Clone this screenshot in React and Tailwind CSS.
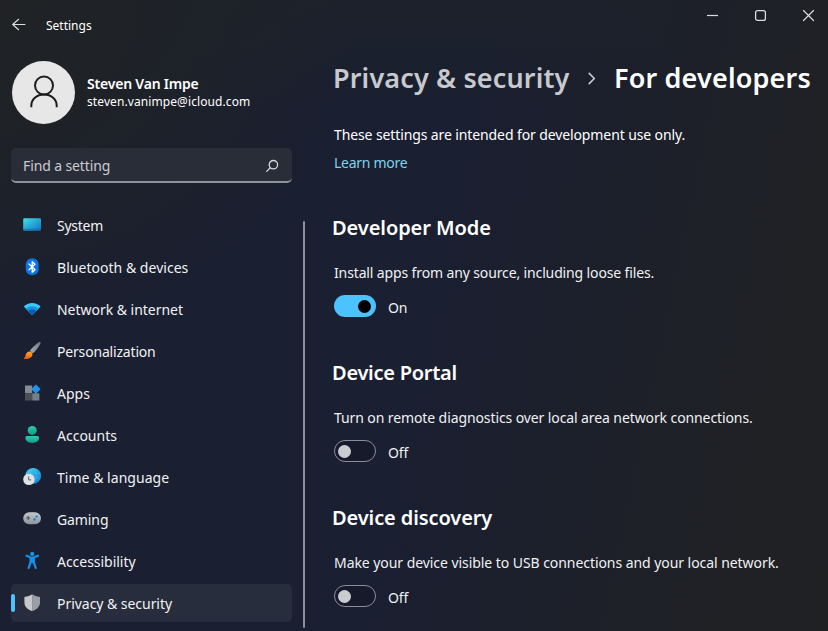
const sectionList = [
  {
    title: "Developer Mode",
    titleClass: "tracking-[-0.07px]",
    text: "Install apps from any source, including loose files.",
    textClass: "tracking-[-0.13px]",
    on: true,
  },
  {
    title: "Device Portal",
    titleClass: "tracking-[-0.26px]",
    text: "Turn on remote diagnostics over local area network connections.",
    textClass: "tracking-[-0.1px]",
    on: false,
  },
  {
    title: "Device discovery",
    titleClass: "tracking-[-0.1px]",
    text: "Make your device visible to USB connections and your local network.",
    textClass: "tracking-[-0.06px]",
    on: false,
  },
];

function SystemIcon() {
  return (
    <svg viewBox="0 0 20 20" className="size-5">
      <defs>
        <linearGradient id="sys" x1="0" y1="0" x2="1" y2="1">
          <stop offset="0" stopColor="#3fe0e6" />
          <stop offset="1" stopColor="#1173c4" />
        </linearGradient>
      </defs>
      <rect x="1.2" y="3.2" width="17.8" height="12.6" rx="1.2" fill="url(#sys)" />
      <path d="M1.2 13.8h17.8v.8a1.2 1.2 0 0 1-1.2 1.2H2.4a1.2 1.2 0 0 1-1.2-1.2z" fill="#0f5fa6" opacity=".55" />
    </svg>
  );
}

function BluetoothIcon() {
  return (
    <svg viewBox="0 0 20 20" className="size-5">
      <rect x="3.8" y="1.3" width="12.8" height="17" rx="6" fill="#0a74ea" />
      <path d="M7 7l6 5.7-2.8 2.6V4.6L13 7.2 7 12.8" fill="none" stroke="#fff" strokeWidth="1.3" strokeLinejoin="round" strokeLinecap="round" />
    </svg>
  );
}

function WifiIcon() {
  return (
    <svg viewBox="0 0 20 20" className="size-5">
      <path d="M1.8 7.6C4 5.2 7 4 10.2 4s6.200 1.200 8.400 3.600L10.900 15.600a1 1 0 0 1-1.400 0z" fill="#3fc9f7" />
      <path d="M3.900 9.700C5.600 8 7.800 7.200 10.200 7.200s4.600.8 6.300 2.500L10.900 15.600a1 1 0 0 1-1.400 0z" fill="#1593de" />
      <path d="M6.200 12.100c1.100-1 2.500-1.500 4-1.500s2.900.5 4 1.500L10.900 15.600a1 1 0 0 1-1.400 0z" fill="#0d5ab3" />
    </svg>
  );
}

function BrushIcon() {
  return (
    <svg viewBox="0 0 20 20" className="size-5">
      <defs>
        <linearGradient id="handle" x1="1" y1="0" x2="0" y2="1">
          <stop offset="0" stopColor="#6d7780" />
          <stop offset="1" stopColor="#a9b2ba" />
        </linearGradient>
        <linearGradient id="bristle" x1="0.600" y1="0" x2="0.300" y2="1">
          <stop offset="0" stopColor="#ffa62e" />
          <stop offset="1" stopColor="#e8590c" />
        </linearGradient>
      </defs>
      <path d="M18.200 1.300c.6.400.5 1.100.1 1.800-1.900 3.400-4.500 6.700-7.300 9.200L7.900 9.600c2.600-3.400 5.300-6 8.600-8.200.6-.4 1.200-.5 1.700-.1z" fill="url(#handle)" />
      <path d="M7.400 10.500c1.700-.2 3.400 1.300 3.100 3.100-.5 3.200-4.200 5-8.300 4.400-.6-.1-.6-.7-.1-1 1.200-.7 1.200-1.900 1.700-3.500.6-1.800 1.800-2.800 3.600-3z" fill="url(#bristle)" />
    </svg>
  );
}

function AppsIcon() {
  return (
    <svg viewBox="0 0 20 20" className="size-5">
      <rect x="3" y="2.500" width="7.200" height="7.800" rx=".6" fill="#858c95" />
      <rect x="3" y="10.300" width="7.200" height="7.200" rx=".6" fill="#4b5057" />
      <rect x="10.200" y="10.200" width="7.200" height="7.300" rx=".6" fill="#777e87" />
      <rect x="10.500" y="2.700" width="6.800" height="6.800" rx="1" transform="rotate(45 13.900 6.100)" fill="#1f93ea" />
    </svg>
  );
}

function AccountsIcon() {
  return (
    <svg viewBox="0 0 20 20" className="size-5">
      <defs>
        <linearGradient id="acc" x1="0" y1="0" x2="0" y2="1">
          <stop offset="0" stopColor="#2bcfae" />
          <stop offset="1" stopColor="#12998a" />
        </linearGradient>
      </defs>
      <circle cx="10.200" cy="5.400" r="4.500" fill="url(#acc)" />
      <path d="M5.200 11h10a1.800 1.800 0 0 1 1.800 1.800c0 3.300-2.900 5.200-6.800 5.200s-6.800-1.900-6.800-5.200A1.800 1.800 0 0 1 5.200 11z" fill="url(#acc)" />
    </svg>
  );
}

function TimeIcon() {
  return (
    <svg viewBox="0 0 20 20" className="size-5">
      <defs>
        <linearGradient id="globe" x1="0" y1="0" x2="1" y2="1">
          <stop offset="0" stopColor="#48d7f2" />
          <stop offset="1" stopColor="#0c78cf" />
        </linearGradient>
      </defs>
      <circle cx="11.200" cy="8.800" r="7.900" fill="url(#globe)" />
      <path d="M3.800 6.400h14.800M3.800 11.200h14.800M11.200 1c-4 4-4 11.500 0 15.600M11.200 1c4 4 4 11.500 0 15.600" fill="none" stroke="#8be6fa" strokeWidth=".5" opacity=".35" />
      <circle cx="6.900" cy="12.400" r="5.700" fill="#dfe1e5" />
      <path d="M6.700 9.500v3.400h2.500" fill="none" stroke="#5b6068" strokeWidth="1" />
    </svg>
  );
}

function GamingIcon() {
  return (
    <svg viewBox="0 0 20 20" className="size-5">
      <defs>
        <linearGradient id="pad" x1="0" y1="0" x2="0" y2="1">
          <stop offset="0" stopColor="#c3c8ce" />
          <stop offset="1" stopColor="#8d949d" />
        </linearGradient>
      </defs>
      <rect x="1.200" y="3.200" width="17.800" height="12" rx="6" fill="url(#pad)" />
      <path d="M6.200 7v4M4.200 9h4" stroke="#4e545c" strokeWidth="1.100" />
      <circle cx="14.600" cy="7.600" r="1.150" fill="#1273d8" />
      <circle cx="12.500" cy="10.500" r="1.150" fill="#1273d8" />
    </svg>
  );
}

function AccessibilityIcon() {
  return (
    <svg viewBox="0 0 20 20" className="size-5">
      <circle cx="10.200" cy="2.900" r="2.100" fill="#1496e8" />
      <path d="M4.500 4.700l3.600 1.500c1.300.5 2.900.5 4.200 0l3.600-1.500M8.600 6.700v4.500l-1.900 5.600M11.800 6.700v4.500l1.900 5.600" fill="none" stroke="#1490e4" strokeWidth="2.300" strokeLinecap="round" strokeLinejoin="round" />
      <path d="M8 6h4.400v6.300H8z" fill="#1490e4" />
    </svg>
  );
}

function ShieldIcon() {
  return (
    <svg viewBox="0 0 20 20" className="size-5">
      <path d="M10.200 1.200c2.200 1.500 4.700 2.300 7.200 2.500q.6.050.6.700v4.800c0 4.200-2.700 7.200-7.800 8.800z" fill="#9b9fa5" />
      <path d="M10.200 1.200C8 2.700 5.500 3.500 3 3.700q-.6.050-.6.700v4.800c0 4.200 2.700 7.200 7.800 8.800z" fill="#c6c8cb" />
    </svg>
  );
}

const nav = [
  { label: "System", Icon: SystemIcon, tracking: "tracking-[-0.25px]" },
  { label: "Bluetooth & devices", Icon: BluetoothIcon, tracking: "tracking-[0.03px]" },
  { label: "Network & internet", Icon: WifiIcon, tracking: "tracking-[-0.03px]" },
  { label: "Personalization", Icon: BrushIcon, tracking: "tracking-[-0.18px]" },
  { label: "Apps", Icon: AppsIcon, tracking: "tracking-[0px]" },
  { label: "Accounts", Icon: AccountsIcon, tracking: "tracking-[0px]" },
  { label: "Time & language", Icon: TimeIcon, tracking: "tracking-[0.03px]" },
  { label: "Gaming", Icon: GamingIcon, tracking: "tracking-[-0.1px]" },
  { label: "Accessibility", Icon: AccessibilityIcon, tracking: "tracking-[-0.03px]" },
  { label: "Privacy & security", Icon: ShieldIcon, tracking: "tracking-[-0.04px]", active: true },
];

function NavItem({ label, Icon, tracking, active }) {
  return (
    <a className={`relative flex h-[38px] items-center gap-[15px] rounded-[5px] pl-[11px] ${active ? "bg-[#282d3d]" : ""}`}>
      {active && <span className="absolute top-[10px] left-0 h-[18px] w-1 rounded-full bg-[#4cc2ff]" />}
      <Icon />
      <span className={`pt-px text-[14px] leading-5 text-[#f1f2f4] ${tracking}`}>{label}</span>
    </a>
  );
}

function Toggle({ on }) {
  return (
    <span
      className={`flex h-[22px] w-[42px] items-center rounded-full ${
        on ? "justify-end bg-[#4cc2ff] pr-[5px]" : "border border-[#8b8d98] bg-[#171a2a] pl-[3px]"
      }`}
    >
      <span className={`size-[13px] rounded-full ${on ? "bg-black" : "bg-[#cbccd1]"}`} />
    </span>
  );
}

export default function App() {
  return (
    <div className="flex h-[631px] w-[828px] overflow-hidden bg-[#1a1f31] bg-[radial-gradient(ellipse_360px_340px_at_0%_0%,#202225_0%,#1e2227_40%,transparent_100%),linear-gradient(102deg,transparent_52%,#1d2029_74%,#1f2125_88%,#202123_100%),linear-gradient(180deg,#1c212b_0px,transparent_110px)] font-['Noto_Sans','Open_Sans',sans-serif] text-white">
      <aside className="flex w-[292px] shrink-0 flex-col pl-[11px]">
        <header className="flex h-[50px] items-center gap-[20px]">
          <svg viewBox="0 0 16 16" className="size-4" fill="none" stroke="#dcdde0" strokeWidth="1.200" strokeLinecap="round" strokeLinejoin="round">
            <path d="M7.600 2.300L1.700 7.500l5.900 5.200M1.900 7.500h12" />
          </svg>
          <span className="-ml-px pt-px text-[12px] leading-4">Settings</span>
        </header>
        <div className="mt-[10px] flex h-16 items-center gap-[12px]">
          <span className="ml-px flex size-[63px] items-center justify-center rounded-full bg-[#e7e7e7]">
            <svg viewBox="0 0 32 36" className="h-9 w-8" fill="none" stroke="#1d1d1f" strokeWidth="2">
              <circle cx="16" cy="11.500" r="9" />
              <path d="M3.300 33.200v-1.500C3.300 25.500 8.600 20.600 16 20.600s12.700 4.900 12.700 11.100v1.500" />
            </svg>
          </span>
          <div className="flex flex-col pt-px">
            <span className="text-[14px] leading-[18px] font-semibold tracking-[-0.2px]">Steven Van Impe</span>
            <span className="text-[12px] leading-[17px] tracking-[0.09px]">steven.vanimpe@icloud.com</span>
          </div>
        </div>
        <div className="mt-6 flex h-[35px] items-center justify-between overflow-hidden rounded-[5px] border-b-2 border-[#8e929c] bg-[#292d38] px-3">
          <span className="pt-[2px] text-[14px] leading-5 tracking-[-0.12px] text-[#c9cbd0]">Find a setting</span>
          <svg viewBox="0 0 14 14" className="mt-[3px] mr-px size-[14px]" fill="none" stroke="#d5d7db" strokeWidth="1.300" strokeLinecap="round">
            <circle cx="8.400" cy="5.700" r="4.200" />
            <path d="M5.300 8.800L1.700 12.400" />
          </svg>
        </div>
        <nav className="mt-[23px] flex flex-col gap-1">
          {nav.map((item) => (
            <NavItem key={item.label} {...item} />
          ))}
        </nav>
      </aside>
      <div className="mt-[221px] ml-[11px] h-[407px] w-[2px] shrink-0 rounded-full bg-[#8f919a]" />
      <main className="flex min-w-0 flex-1 flex-col pl-[28px]">
        <div className="flex h-[31px] items-center justify-end gap-[35px] pr-[13px]">
          <svg viewBox="0 0 13 13" className="size-[13px]" stroke="#dcdcdc" strokeWidth="1.200">
            <path d="M1 6.500h11" />
          </svg>
          <svg viewBox="0 0 13 13" className="size-[13px]" fill="none" stroke="#dcdcdc" strokeWidth="1.300">
            <rect x="1.600" y="1.600" width="9.800" height="9.800" rx="2" />
          </svg>
          <svg viewBox="0 0 13 13" className="size-[13px]" stroke="#dcdcdc" strokeWidth="1.200" strokeLinecap="round">
            <path d="M1.500 1.500l10 10M11.500 1.500l-10 10" />
          </svg>
        </div>
        <h1 className="mt-[29px] flex h-9 items-center text-[27px] leading-9 font-semibold whitespace-nowrap">
          <span className="w-[238px] tracking-[0.14px] text-[#c8c9cd]">Privacy &amp; security</span>
          <svg viewBox="0 0 10 14" className="ml-[16px] h-[13px] w-[10px]" fill="none" stroke="#c8c9cd" strokeWidth="1.800" strokeLinecap="round" strokeLinejoin="round">
            <path d="M2 1.500L7.500 7 2 12.500" />
          </svg>
          <span className="ml-[17px] tracking-[0.16px]">For developers</span>
        </h1>
        <p className="mt-[29px] ml-[1px] text-[14px] leading-5 tracking-[-0.11px] whitespace-nowrap">
          These settings are intended for development use only.
        </p>
        <a className="mt-[8px] ml-[1px] text-[14px] leading-5 tracking-[-0.28px] text-[#7fd3ea]">Learn more</a>
        <div className="mt-[41px] flex flex-col gap-[27px]">
          {sectionList.map((s) => (
            <section key={s.title} className="flex h-[118px] flex-col">
              <h2 className={`-ml-px text-[20px] leading-7 font-semibold ${s.titleClass}`}>{s.title}</h2>
              <p className={`mt-[21px] ml-[1px] text-[14px] leading-5 whitespace-nowrap text-[#f0f1f3] ${s.textClass}`}>{s.text}</p>
              <div className="mt-[12px] ml-[1px] flex h-[22px] items-center gap-[12px]">
                <Toggle on={s.on} />
                <span className="pt-[3px] text-[14px] leading-5 tracking-[-0.1px] text-[#f0f1f3]">{s.on ? "On" : "Off"}</span>
              </div>
            </section>
          ))}
        </div>
      </main>
    </div>
  );
}
